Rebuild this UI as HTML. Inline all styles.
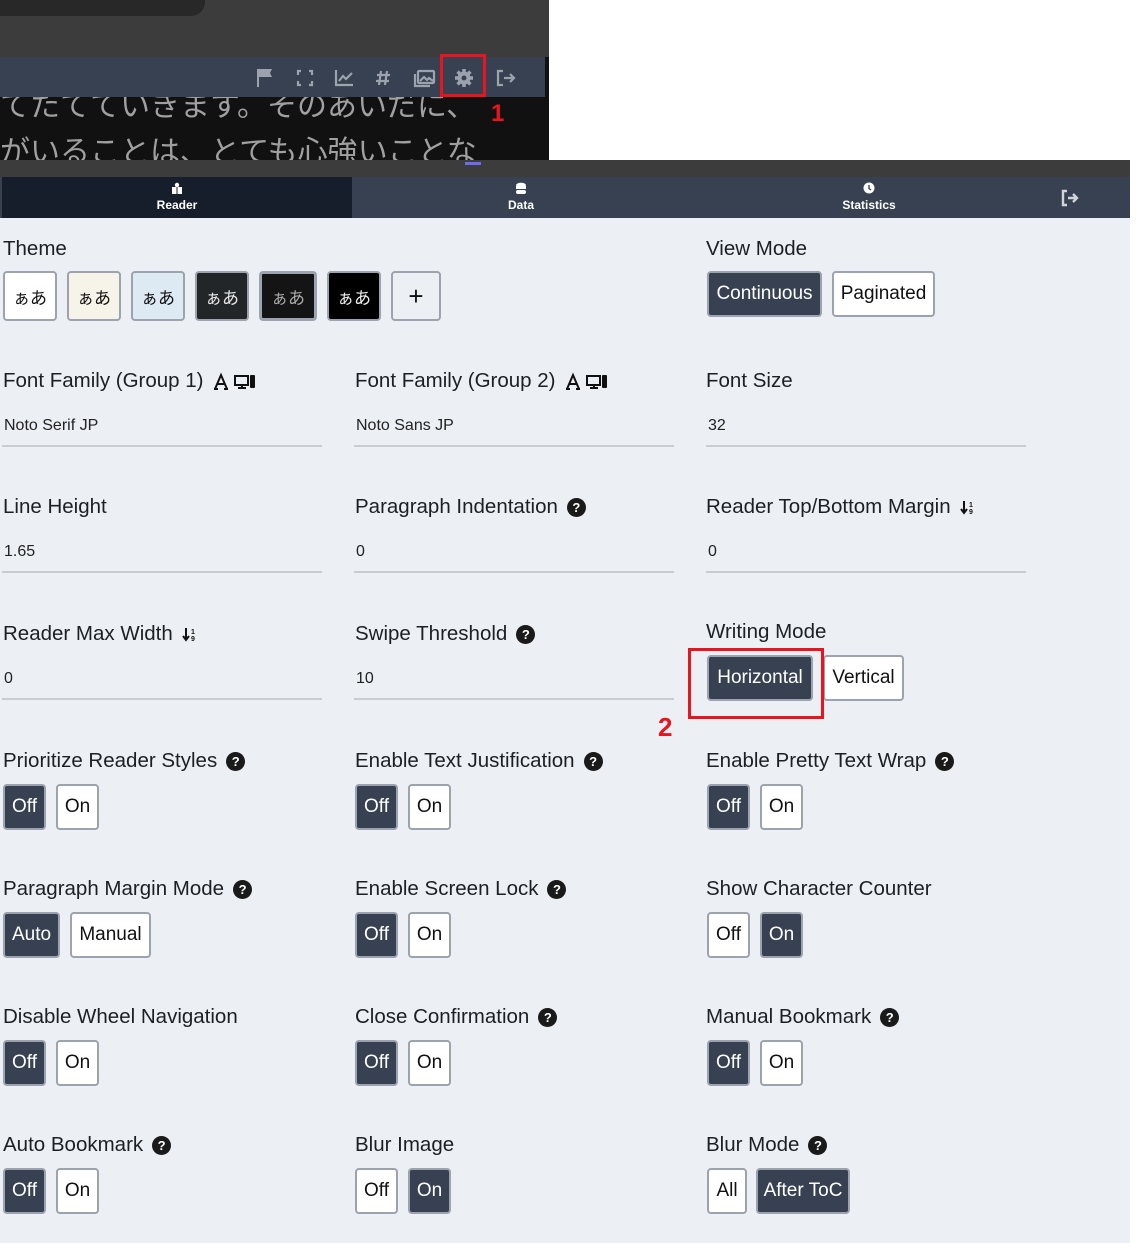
<!DOCTYPE html>
<html><head><meta charset="utf-8"><style>
*{box-sizing:border-box;margin:0;padding:0}
body{width:1148px;height:1243px;position:relative;background:#fff;font-family:"Liberation Sans","Noto Sans CJK JP",sans-serif;overflow:hidden;color:#1f2328}
.a{position:absolute}
.lbl{position:absolute;font-size:20.5px;white-space:nowrap;color:#1c1f24;display:flex;align-items:center;gap:9px;height:26px}
.inp{position:absolute;width:320px;height:31px;border-bottom:2px solid #c9ccd1;font-size:16px;padding-left:2px;padding-top:1px;color:#222}
.b{position:absolute;height:46px;border:2px solid #9ca3af;border-radius:4px;background:#fff;font-size:19px;display:flex;align-items:center;justify-content:center;color:#111}
.d{background:#374151;color:#fff}
.q{display:inline-flex;width:19px;height:19px;border-radius:50%;background:#1a1a1a;color:#fff;font-size:13px;font-weight:bold;align-items:center;justify-content:center}
</style></head><body>
<div class="a" style="left:0;top:0;width:549px;height:57px;background:#3c3c3c"></div>
<div class="a" style="left:0;top:0;width:205px;height:16px;background:#282828;border-radius:0 0 14px 0"></div>
<div class="a" style="left:0;top:57px;width:545px;height:40px;background:#374151"></div>
<div class="a" style="left:545px;top:57px;width:4px;height:103px;background:#111"></div>
<svg class="a" style="left:250px;top:64px" width="280" height="28" viewBox="0 0 280 28">
<g fill="#9ca3af"><path d="M7 5h2v18h-2z M9 5h13l-2 4 2 4h-13z"/></g>
<g fill="none" stroke="#9ca3af" stroke-width="2.2">
<path d="M51 7h-3v4 M59 7h3v4 M51 21h-3v-4 M59 21h3v-4"/>
<path d="M86 6v15h17 M89 17l4-5 3 3 6-6"/>
<path d="M131 7l-2 14 M137 7l-2 14 M127 11h13 M126 17h13"/>
<rect x="168" y="7" width="16" height="12" rx="1"/><path d="M165 10v12h15"/>
<path d="M170 17l4-4 3 3 2-2 4 3"/>
<path d="M253 7h-5v14h5 M254 14h10 M260 10l4 4-4 4"/>
</g>
<g fill="#9ca3af"><circle cx="214" cy="14" r="6.5"/>
<g stroke="#9ca3af" stroke-width="3.5"><path d="M214 5v18 M205 14h18 M207.6 7.6l12.8 12.8 M220.4 7.6l-12.8 12.8"/></g>
<circle cx="214" cy="14" r="2.5" fill="#374151"/></g>
</svg>
<div class="a" style="left:0;top:97px;width:545px;height:63px;background:#111;overflow:hidden">
<div class="a" style="left:0;top:-16px;font-family:'Noto Sans CJK JP',sans-serif;font-size:30px;color:#a0a0a0;white-space:nowrap">てたてていきます。そのあいだに、</div>
<div class="a" style="left:0;top:30px;font-family:'Noto Sans CJK JP',sans-serif;font-size:30px;color:#a0a0a0;white-space:nowrap">がいることは、とても心強いことな</div>
</div>
<div class="a" style="left:440px;top:54px;width:46px;height:43px;border:3px solid #e8151f"></div>
<div class="a" style="left:491px;top:100px;font-size:24px;font-weight:bold;color:#e8151f">1</div>
<div class="a" style="left:0;top:160px;width:1130px;height:17px;background:#3c3c3c"></div>
<div class="a" style="left:465px;top:162px;width:16px;height:3px;background:#6c6cf0"></div>
<div class="a" style="left:0;top:177px;width:1130px;height:41px;background:#374151"></div>
<div class="a" style="left:2px;top:177px;width:350px;height:41px;background:#161d2b"></div>
<div class="a" style="left:2px;top:182px;width:350px;text-align:center;color:#fff;font-size:12px;font-weight:bold;line-height:14px">
<div style="height:16px"><svg width="12" height="12"><rect x="1" y="5" width="10" height="7" fill="#fff"/><circle cx="6" cy="3" r="2.2" fill="#fff"/><path d="M6 5v7" stroke="#161d2b"/></svg></div>Reader</div>
<div class="a" style="left:352px;top:182px;width:338px;text-align:center;color:#fff;font-size:12px;font-weight:bold;line-height:14px">
<div style="height:16px"><svg width="12" height="13"><ellipse cx="6" cy="3" rx="5" ry="2.2" fill="#fff"/><rect x="1" y="4" width="10" height="3" fill="#fff"/><rect x="1" y="8" width="10" height="4" rx="2" fill="#fff"/></svg></div>Data</div>
<div class="a" style="left:700px;top:182px;width:338px;text-align:center;color:#fff;font-size:12px;font-weight:bold;line-height:14px">
<div style="height:16px"><svg width="12" height="12"><circle cx="6" cy="6" r="5.5" fill="#fff"/><path d="M6 3v3.5l2 1.5" stroke="#374151" stroke-width="1.4" fill="none"/></svg></div>Statistics</div>
<svg class="a" style="left:1060px;top:189px" width="20" height="18"><path d="M7 2H3v14h4 M8 9h8 M13 5l4 4-4 4" stroke="#d1d5db" stroke-width="2.4" fill="none"/></svg>
<div class="a" style="left:0;top:218px;width:1130px;height:1025px;background:#eceff3"></div>

<div class="lbl" style="left:3px;top:236px">Theme</div>
<div class="b" style="left:3px;top:271px;width:54px;height:50px;font-size:17px">ぁあ</div>
<div class="b" style="left:67px;top:271px;width:54px;height:50px;font-size:17px;background:#f6f4e8">ぁあ</div>
<div class="b" style="left:131px;top:271px;width:54px;height:50px;font-size:17px;background:#dde9f3">ぁあ</div>
<div class="b" style="left:195px;top:271px;width:54px;height:50px;font-size:17px;background:#232629;color:#e8e8e8">ぁあ</div>
<div class="b" style="left:259px;top:271px;width:58px;height:50px;font-size:17px;background:#141414;color:#aaa;border-width:3px">ぁあ</div>
<div class="b" style="left:327px;top:271px;width:54px;height:50px;font-size:17px;background:#000;color:#eee">ぁあ</div>
<div class="b" style="left:391px;top:271px;width:50px;height:50px;font-size:26px;background:#eceff3">+</div>

<div class="lbl" style="left:706px;top:236px">View Mode</div>
<div class="b d" style="left:707px;top:271px;width:115px">Continuous</div>
<div class="b" style="left:832px;top:271px;width:103px">Paginated</div>

<div class="lbl" style="left:3px;top:368px">Font Family (Group 1) <svg width="46" height="18" viewBox="0 0 46 18"><path d="M2 17L8 3l6 14M4.5 12h7M1 17h4M11 17h4" stroke="#111" stroke-width="2" fill="none"/><rect x="22" y="4" width="13" height="9" fill="none" stroke="#111" stroke-width="2"/><path d="M25 16h8M29 13v3" stroke="#111" stroke-width="2"/><rect x="37" y="3" width="5" height="13" rx="1" fill="#111"/></svg></div>
<div class="inp" style="left:2px;top:416px">Noto Serif JP</div>
<div class="lbl" style="left:355px;top:368px">Font Family (Group 2) <svg width="46" height="18" viewBox="0 0 46 18"><path d="M2 17L8 3l6 14M4.5 12h7M1 17h4M11 17h4" stroke="#111" stroke-width="2" fill="none"/><rect x="22" y="4" width="13" height="9" fill="none" stroke="#111" stroke-width="2"/><path d="M25 16h8M29 13v3" stroke="#111" stroke-width="2"/><rect x="37" y="3" width="5" height="13" rx="1" fill="#111"/></svg></div>
<div class="inp" style="left:354px;top:416px">Noto Sans JP</div>
<div class="lbl" style="left:706px;top:368px">Font Size</div>
<div class="inp" style="left:706px;top:416px">32</div>

<div class="lbl" style="left:3px;top:494px">Line Height</div>
<div class="inp" style="left:2px;top:542px">1.65</div>
<div class="lbl" style="left:355px;top:494px">Paragraph Indentation <span class="q">?</span></div>
<div class="inp" style="left:354px;top:542px">0</div>
<div class="lbl" style="left:706px;top:494px">Reader Top/Bottom Margin <svg width="16" height="16" viewBox="0 0 16 16"><path d="M4 2v11M1 10l3 4 3-4" stroke="#111" stroke-width="2" fill="none"/><text x="9" y="8" font-size="7" font-weight="bold" fill="#111" font-family="Liberation Sans">1</text><text x="9" y="15" font-size="7" font-weight="bold" fill="#111" font-family="Liberation Sans">9</text></svg></div>
<div class="inp" style="left:706px;top:542px">0</div>

<div class="lbl" style="left:3px;top:621px">Reader Max Width <svg width="16" height="16" viewBox="0 0 16 16"><path d="M4 2v11M1 10l3 4 3-4" stroke="#111" stroke-width="2" fill="none"/><text x="9" y="8" font-size="7" font-weight="bold" fill="#111" font-family="Liberation Sans">1</text><text x="9" y="15" font-size="7" font-weight="bold" fill="#111" font-family="Liberation Sans">9</text></svg></div>
<div class="inp" style="left:2px;top:669px">0</div>
<div class="lbl" style="left:355px;top:621px">Swipe Threshold <span class="q">?</span></div>
<div class="inp" style="left:354px;top:669px">10</div>
<div class="lbl" style="left:706px;top:619px">Writing Mode</div>
<div class="b d" style="left:707px;top:655px;width:106px">Horizontal</div>
<div class="b" style="left:823px;top:655px;width:81px">Vertical</div>
<div class="a" style="left:688px;top:648px;width:136px;height:71px;border:3px solid #e8151f"></div>
<div class="a" style="left:658px;top:712px;font-size:26px;font-weight:bold;color:#e8151f">2</div>

<div class="lbl" style="left:3px;top:748px">Prioritize Reader Styles <span class="q">?</span></div>
<div class="b d" style="left:3px;top:784px;width:43px">Off</div><div class="b" style="left:56px;top:784px;width:43px">On</div>
<div class="lbl" style="left:355px;top:748px">Enable Text Justification <span class="q">?</span></div>
<div class="b d" style="left:355px;top:784px;width:43px">Off</div><div class="b" style="left:408px;top:784px;width:43px">On</div>
<div class="lbl" style="left:706px;top:748px">Enable Pretty Text Wrap <span class="q">?</span></div>
<div class="b d" style="left:707px;top:784px;width:43px">Off</div><div class="b" style="left:760px;top:784px;width:43px">On</div>

<div class="lbl" style="left:3px;top:876px">Paragraph Margin Mode <span class="q">?</span></div>
<div class="b d" style="left:3px;top:912px;width:57px">Auto</div><div class="b" style="left:70px;top:912px;width:81px">Manual</div>
<div class="lbl" style="left:355px;top:876px">Enable Screen Lock <span class="q">?</span></div>
<div class="b d" style="left:355px;top:912px;width:43px">Off</div><div class="b" style="left:408px;top:912px;width:43px">On</div>
<div class="lbl" style="left:706px;top:876px">Show Character Counter</div>
<div class="b" style="left:707px;top:912px;width:43px">Off</div><div class="b d" style="left:760px;top:912px;width:43px">On</div>

<div class="lbl" style="left:3px;top:1004px">Disable Wheel Navigation</div>
<div class="b d" style="left:3px;top:1040px;width:43px">Off</div><div class="b" style="left:56px;top:1040px;width:43px">On</div>
<div class="lbl" style="left:355px;top:1004px">Close Confirmation <span class="q">?</span></div>
<div class="b d" style="left:355px;top:1040px;width:43px">Off</div><div class="b" style="left:408px;top:1040px;width:43px">On</div>
<div class="lbl" style="left:706px;top:1004px">Manual Bookmark <span class="q">?</span></div>
<div class="b d" style="left:707px;top:1040px;width:43px">Off</div><div class="b" style="left:760px;top:1040px;width:43px">On</div>

<div class="lbl" style="left:3px;top:1132px">Auto Bookmark <span class="q">?</span></div>
<div class="b d" style="left:3px;top:1168px;width:43px">Off</div><div class="b" style="left:56px;top:1168px;width:43px">On</div>
<div class="lbl" style="left:355px;top:1132px">Blur Image</div>
<div class="b" style="left:355px;top:1168px;width:43px">Off</div><div class="b d" style="left:408px;top:1168px;width:43px">On</div>
<div class="lbl" style="left:706px;top:1132px">Blur Mode <span class="q">?</span></div>
<div class="b" style="left:707px;top:1168px;width:40px">All</div><div class="b d" style="left:756px;top:1168px;width:94px">After ToC</div>
</body></html>
